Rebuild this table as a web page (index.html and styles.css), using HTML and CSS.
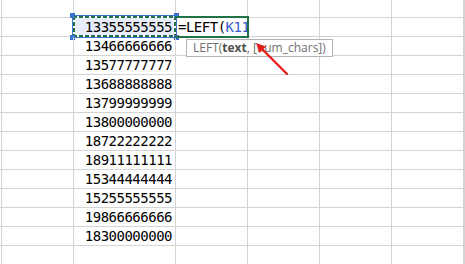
FILE: index.html
```html
<!DOCTYPE html>
<html>
<head>
<meta charset="utf-8">
<link rel="stylesheet" href="styles.css">
</head>
<body>
<div class="sheet">
  <div class="c"></div><div class="c"></div><div class="c"></div><div class="c"></div><div class="c"></div><div class="c"></div><div class="c"></div><div class="c"></div>

  <div class="c"></div><div class="c"></div>
  <div class="c num sel">13355555555
    <div class="marquee">
      <span class="h tl"></span><span class="h tr"></span><span class="h bl"></span><span class="h br"></span>
    </div>
  </div>
  <div class="c edit">=LEFT(<span class="ref">K11</span><span class="caret"></span></div>
  <div class="c"></div><div class="c"></div><div class="c"></div><div class="c"></div>

  <div class="c"></div><div class="c"></div><div class="c num">13466666666</div><div class="c"></div><div class="c"></div><div class="c"></div><div class="c"></div><div class="c"></div>
  <div class="c"></div><div class="c"></div><div class="c num">13577777777</div><div class="c"></div><div class="c"></div><div class="c"></div><div class="c"></div><div class="c"></div>
  <div class="c"></div><div class="c"></div><div class="c num">13688888888</div><div class="c"></div><div class="c"></div><div class="c"></div><div class="c"></div><div class="c"></div>
  <div class="c"></div><div class="c"></div><div class="c num">13799999999</div><div class="c"></div><div class="c"></div><div class="c"></div><div class="c"></div><div class="c"></div>
  <div class="c"></div><div class="c"></div><div class="c num">13800000000</div><div class="c"></div><div class="c"></div><div class="c"></div><div class="c"></div><div class="c"></div>
  <div class="c"></div><div class="c"></div><div class="c num">18722222222</div><div class="c"></div><div class="c"></div><div class="c"></div><div class="c"></div><div class="c"></div>
  <div class="c"></div><div class="c"></div><div class="c num">18911111111</div><div class="c"></div><div class="c"></div><div class="c"></div><div class="c"></div><div class="c"></div>
  <div class="c"></div><div class="c"></div><div class="c num">15344444444</div><div class="c"></div><div class="c"></div><div class="c"></div><div class="c"></div><div class="c"></div>
  <div class="c"></div><div class="c"></div><div class="c num">15255555555</div><div class="c"></div><div class="c"></div><div class="c"></div><div class="c"></div><div class="c"></div>
  <div class="c"></div><div class="c"></div><div class="c num">19866666666</div><div class="c"></div><div class="c"></div><div class="c"></div><div class="c"></div><div class="c"></div>
  <div class="c"></div><div class="c"></div><div class="c num">18300000000</div><div class="c"></div><div class="c"></div><div class="c"></div><div class="c"></div><div class="c"></div>

  <div class="c"></div><div class="c"></div><div class="c"></div><div class="c"></div><div class="c"></div><div class="c"></div><div class="c"></div><div class="c"></div>
</div>

<div class="tip">LEFT(<b>text</b>, [num_chars])</div>

<svg class="arrow" width="465" height="264" viewBox="0 0 465 264">
  <line x1="287" y1="74" x2="261" y2="48" stroke="#e3211c" stroke-width="2.4" stroke-linecap="round"/>
  <polygon points="256,43 266,46.5 259.5,53" fill="#e3211c"/>
</svg>
</body>
</html>
```

FILE: styles.css
```css
html, body {
  margin: 0;
  padding: 0;
  background: #fff;
  overflow: hidden;
  width: 465px;
  height: 264px;
}

.sheet {
  display: grid;
  grid-template-columns: 2px 72px 102px 72px 72px 72px 72px 1fr;
  grid-template-rows: 18px repeat(13, 19px);
  width: 465px;
  height: 264px;
  overflow: hidden;
}

.c {
  box-sizing: border-box;
  border-right: 1px solid #d4d4d4;
  border-bottom: 1px solid #d4d4d4;
  position: relative;
  font-family: "DejaVu Sans Mono", "Liberation Mono", monospace;
  font-size: 14px;
  letter-spacing: -0.5px;
  line-height: 15px;
  color: #000;
  display: flex;
  align-items: flex-end;
  white-space: nowrap;
}

.num {
  justify-content: flex-end;
  padding-right: 3px;
  padding-bottom: 1px;
}

.sel {
  background: #e6edf8;
}

.marquee {
  position: absolute;
  left: -2px;
  top: -3px;
  width: 105px;
  height: 23px;
  box-sizing: border-box;
  border: 1px solid #3f74cc;
  background:
    repeating-linear-gradient(90deg, #217346 0 4px, #ffffff 4px 6px) top / 100% 2px no-repeat,
    repeating-linear-gradient(90deg, #217346 0 4px, #ffffff 4px 6px) bottom / 100% 2px no-repeat,
    repeating-linear-gradient(180deg, #217346 0 4px, #ffffff 4px 6px) left / 2px 100% no-repeat,
    repeating-linear-gradient(180deg, #217346 0 4px, #ffffff 4px 6px) right / 2px 100% no-repeat;
}

.h {
  position: absolute;
  width: 5px;
  height: 5px;
  background: #3a6fcb;
}
.tl { left: -3px; top: -3px; }
.tr { right: -3px; top: -3px; }
.bl { left: -3px; bottom: -3px; }
.br { right: -3px; bottom: -3px; }

.edit {
  padding-left: 2px;
  padding-bottom: 1px;
  overflow: visible;
  z-index: 2;
}
.edit::after {
  content: "";
  position: absolute;
  left: -1px;
  top: -2px;
  right: -2px;
  bottom: -2px;
  border: 2px solid #217346;
  border-left: 0;
}
.ref {
  color: #3460c8;
}
.caret {
  display: inline-block;
  width: 1px;
  height: 14px;
  background: #000;
  margin-left: 1px;
  align-self: flex-end;
}

.tip {
  position: absolute;
  left: 186px;
  top: 39px;
  width: 147px;
  height: 18px;
  box-sizing: border-box;
  border: 1px solid #b4b4b4;
  background: #fff;
  font-family: "Open Sans", "Noto Sans", sans-serif;
  font-size: 12px;
  line-height: 16px;
  color: #707070;
  padding-left: 6px;
  white-space: nowrap;
  z-index: 3;
}
.tip b {
  color: #505050;
  font-weight: 700;
}

.arrow {
  position: absolute;
  left: 0;
  top: 0;
  z-index: 4;
  pointer-events: none;
}
```
